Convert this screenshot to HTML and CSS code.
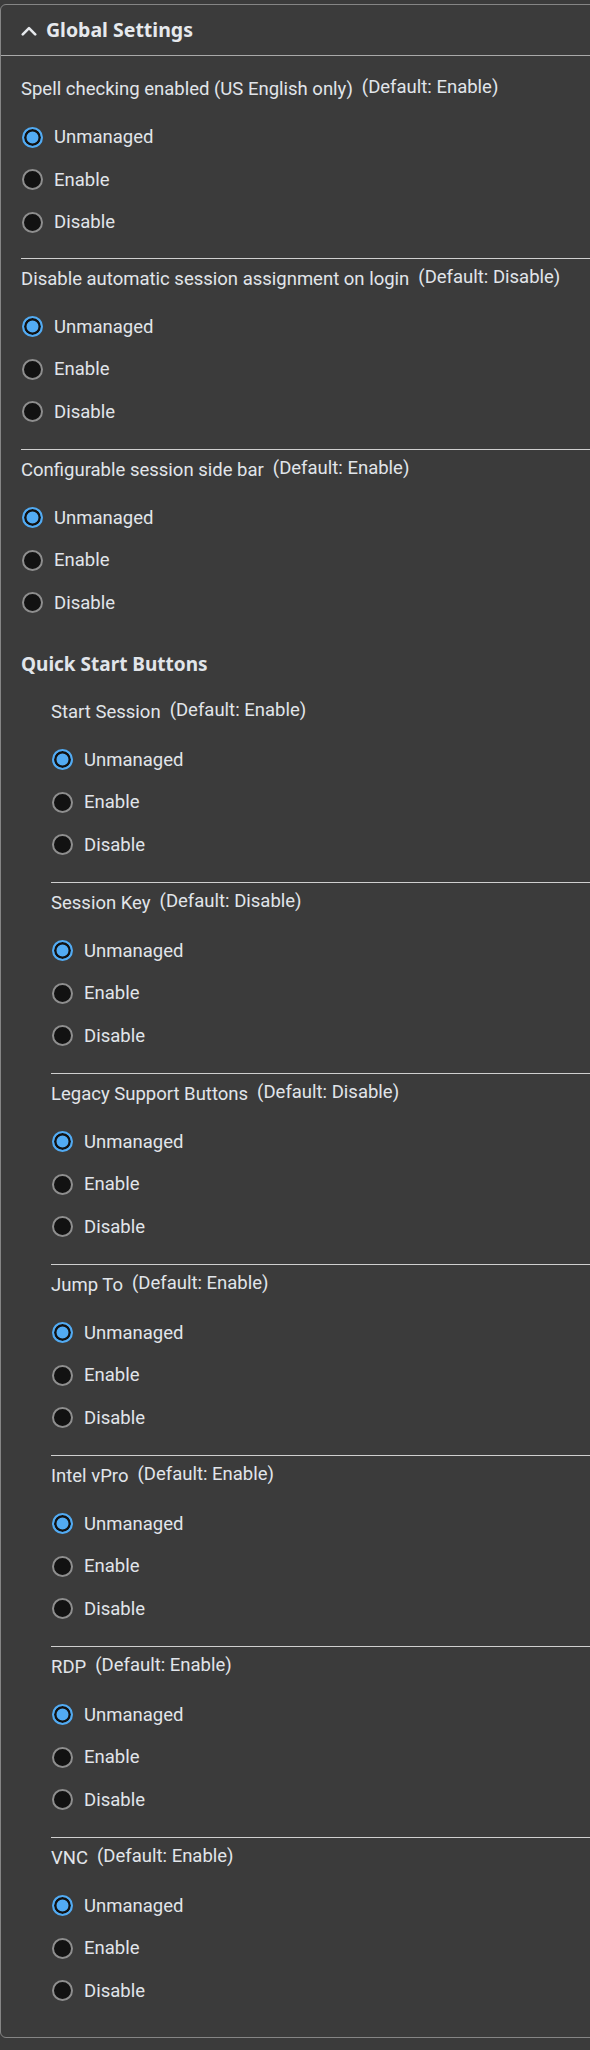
FILE: index.html
```html
<!DOCTYPE html>
<html lang="en">
<head>
<meta charset="utf-8">
<title>Global Settings</title>
<link rel="stylesheet" href="styles.css">
</head>
<body>
<div class="card">
  <div class="card-header">
    <svg class="chevron" width="16" height="10" viewBox="0 0 16 10" aria-hidden="true"><polyline points="1.8,8.4 8,2.2 14.2,8.4" fill="none" stroke="currentColor" stroke-width="2.6" stroke-linecap="round" stroke-linejoin="round"/></svg>
    <span class="card-title">Global Settings</span>
  </div>
  <div class="card-body">
    <div class="setting first">
      <div class="setting-label">Spell checking enabled (US English only)<span class="default">(Default: Enable)</span></div>
      <div class="options">
        <label class="option"><input class="radio" type="radio" name="s1" checked><span>Unmanaged</span></label>
        <label class="option"><input class="radio" type="radio" name="s1"><span>Enable</span></label>
        <label class="option"><input class="radio" type="radio" name="s1"><span>Disable</span></label>
      </div>
    </div>
    <div class="setting">
      <div class="setting-label">Disable automatic session assignment on login<span class="default">(Default: Disable)</span></div>
      <div class="options">
        <label class="option"><input class="radio" type="radio" name="s2" checked><span>Unmanaged</span></label>
        <label class="option"><input class="radio" type="radio" name="s2"><span>Enable</span></label>
        <label class="option"><input class="radio" type="radio" name="s2"><span>Disable</span></label>
      </div>
    </div>
    <div class="setting last-top">
      <div class="setting-label">Configurable session side bar<span class="default">(Default: Enable)</span></div>
      <div class="options">
        <label class="option"><input class="radio" type="radio" name="s3" checked><span>Unmanaged</span></label>
        <label class="option"><input class="radio" type="radio" name="s3"><span>Enable</span></label>
        <label class="option"><input class="radio" type="radio" name="s3"><span>Disable</span></label>
      </div>
    </div>

    <div class="section">
      <div class="section-title">Quick Start Buttons</div>
      <div class="section-body">
        <div class="setting first-sub">
          <div class="setting-label">Start Session<span class="default">(Default: Enable)</span></div>
          <div class="options">
            <label class="option"><input class="radio" type="radio" name="q1" checked><span>Unmanaged</span></label>
            <label class="option"><input class="radio" type="radio" name="q1"><span>Enable</span></label>
            <label class="option"><input class="radio" type="radio" name="q1"><span>Disable</span></label>
          </div>
        </div>
        <div class="setting">
          <div class="setting-label">Session Key<span class="default">(Default: Disable)</span></div>
          <div class="options">
            <label class="option"><input class="radio" type="radio" name="q2" checked><span>Unmanaged</span></label>
            <label class="option"><input class="radio" type="radio" name="q2"><span>Enable</span></label>
            <label class="option"><input class="radio" type="radio" name="q2"><span>Disable</span></label>
          </div>
        </div>
        <div class="setting">
          <div class="setting-label">Legacy Support Buttons<span class="default">(Default: Disable)</span></div>
          <div class="options">
            <label class="option"><input class="radio" type="radio" name="q3" checked><span>Unmanaged</span></label>
            <label class="option"><input class="radio" type="radio" name="q3"><span>Enable</span></label>
            <label class="option"><input class="radio" type="radio" name="q3"><span>Disable</span></label>
          </div>
        </div>
        <div class="setting">
          <div class="setting-label">Jump To<span class="default">(Default: Enable)</span></div>
          <div class="options">
            <label class="option"><input class="radio" type="radio" name="q4" checked><span>Unmanaged</span></label>
            <label class="option"><input class="radio" type="radio" name="q4"><span>Enable</span></label>
            <label class="option"><input class="radio" type="radio" name="q4"><span>Disable</span></label>
          </div>
        </div>
        <div class="setting">
          <div class="setting-label">Intel vPro<span class="default">(Default: Enable)</span></div>
          <div class="options">
            <label class="option"><input class="radio" type="radio" name="q5" checked><span>Unmanaged</span></label>
            <label class="option"><input class="radio" type="radio" name="q5"><span>Enable</span></label>
            <label class="option"><input class="radio" type="radio" name="q5"><span>Disable</span></label>
          </div>
        </div>
        <div class="setting">
          <div class="setting-label">RDP<span class="default">(Default: Enable)</span></div>
          <div class="options">
            <label class="option"><input class="radio" type="radio" name="q6" checked><span>Unmanaged</span></label>
            <label class="option"><input class="radio" type="radio" name="q6"><span>Enable</span></label>
            <label class="option"><input class="radio" type="radio" name="q6"><span>Disable</span></label>
          </div>
        </div>
        <div class="setting last-sub">
          <div class="setting-label">VNC<span class="default">(Default: Enable)</span></div>
          <div class="options">
            <label class="option"><input class="radio" type="radio" name="q7" checked><span>Unmanaged</span></label>
            <label class="option"><input class="radio" type="radio" name="q7"><span>Enable</span></label>
            <label class="option"><input class="radio" type="radio" name="q7"><span>Disable</span></label>
          </div>
        </div>
      </div>
    </div>
  </div>
</div>
</body>
</html>
```
FILE: styles.css
```css
html, body {
  margin: 0;
  padding: 0;
  background: #3b3b3b;
  overflow-x: hidden;
}

body {
  font-family: Roboto, "Noto Sans", sans-serif;
  color: #e1e5ea;
  padding-top: 4px;
}

.card {
  margin-right: -20px;
  border: 1px solid #858585;
  border-radius: 6px;
  background: #3b3b3b;
}

.card-header {
  display: flex;
  align-items: center;
  height: 50px;
  padding-left: 20px;
  border-bottom: 1px solid #a9a9a9;
  color: #e6e9ed;
}

.chevron {
  display: block;
  margin-right: 9px;
  margin-top: 1px;
}

.card-title {
  font-family: "Noto Sans", Roboto, sans-serif;
  font-size: 19.5px;
  font-weight: 700;
  line-height: 26px;
}

.card-body {
  padding: 0 0 25px 20px;
}

.setting {
  border-top: 1px solid #cfcfcf;
  padding: 8px 0 15.5px 0;
}

.setting.first {
  border-top: none;
  padding-top: 21px;
  padding-bottom: 14px;
}

.setting.first-sub {
  border-top: none;
  padding-top: 0;
}

.setting.last-top,
.setting.last-sub {
  padding-bottom: 0;
}

.setting-label {
  height: 24px;
  font-size: 18.5px;
  line-height: 24px;
  white-space: nowrap;
}

.default {
  display: inline-block;
  margin-left: 9px;
  font-size: 18.5px;
  line-height: 18px;
  vertical-align: 2px;
}

.options {
  margin-top: 15px;
  display: flex;
  flex-direction: column;
}

.option {
  display: flex;
  align-items: center;
  height: 42.5px;
  font-size: 18.5px;
  gap: 11px;
}

.radio {
  appearance: none;
  -webkit-appearance: none;
  margin: 0 0 0 1px;
  width: 21px;
  height: 21px;
  border-radius: 50%;
  border: 2px solid #8e8e8e;
  background: #121212;
  flex: none;
}

.radio:checked {
  border-color: #52abf3;
  background: #52abf3;
  box-shadow: inset 0 0 0 2.5px #121212;
}

.section-title {
  margin-top: 27px;
  font-family: "Noto Sans", Roboto, sans-serif;
  font-size: 19px;
  font-weight: 700;
  line-height: 26px;
}

.section-body {
  margin-left: 30px;
  padding-top: 22.5px;
}
```
